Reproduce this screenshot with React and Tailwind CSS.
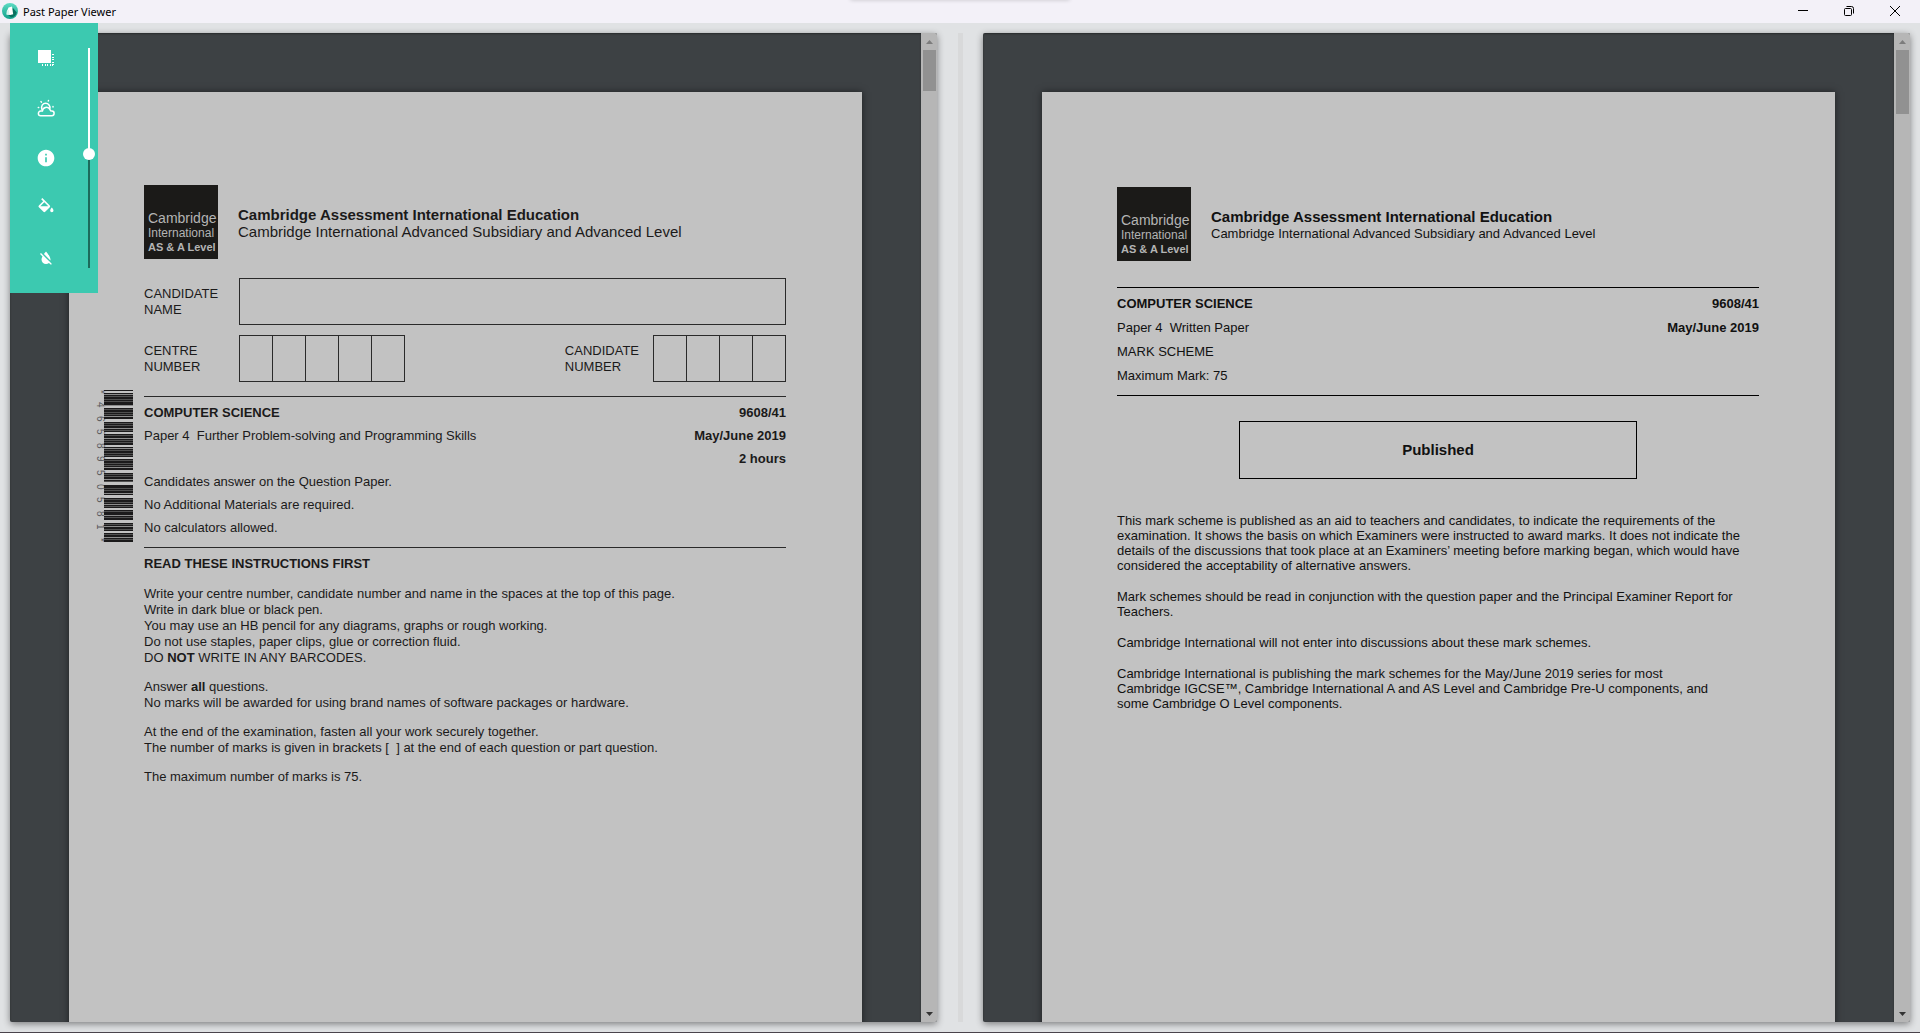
import { useState } from "react";
import { MdInfo, MdFormatColorReset } from "react-icons/md";

const BAR_GROUPS = [
  [0, 1], [3, 16], [18, 29], [32, 42], [44, 55], [57, 67], [69, 80], [83, 92], [95, 105], [108, 118], [120, 130], [133, 141], [143, 152],
];
const BAR_WIDTHS = [2, 1, 1, 2, 1, 3, 1, 2, 1, 1];

function buildBars() {
  const bars = [];
  let n = 0;
  for (const [start, end] of BAR_GROUPS) {
    let y = start;
    while (y < end) {
      const h = Math.min(BAR_WIDTHS[n % BAR_WIDTHS.length], end - y);
      bars.push({ y, h, fill: "#1b1a1b" });
      y += h;
      if (y < end) bars.push({ y, h: 1, fill: n % 4 === 1 ? "#8c8c8c" : "#505050" });
      y += 1;
      n += 1;
    }
  }
  return bars;
}

const BARS = buildBars();

function Barcode() {
  return (
    <div className="flex h-[152px] shrink-0" aria-label="Barcode">
      <div className="flex w-2 flex-col items-center justify-between text-[10px] leading-[8px] text-[#5a5a5e]">
        {"*4658950581*".split("").map((c, i) => (
          <span key={i} className="[writing-mode:vertical-rl]">{c}</span>
        ))}
      </div>
      <svg width="29" height="152" viewBox="0 0 29 152" shapeRendering="crispEdges">
        {BARS.map((b, i) => (
          <rect key={i} y={b.y} width="29" height={b.h} fill={b.fill} />
        ))}
      </svg>
    </div>
  );
}

function AppLogo() {
  return (
    <svg width="16" height="16" viewBox="0 0 16 16" aria-hidden="true">
      <defs>
        <linearGradient id="ring" x1="0" y1="0" x2="0" y2="1">
          <stop offset="0" stopColor="#5fdcc4" />
          <stop offset="1" stopColor="#0fa08a" />
        </linearGradient>
      </defs>
      <circle cx="8" cy="8" r="8" fill="url(#ring)" />
      <path d="M11 5l3.800 4.500A7 7 0 0 1 9 14.500L5 11z" fill="#08705f" />
      <path d="M6.500 4.500L10 3.500l1.200 7.700-3 .7-3.700-.5.300-3z" fill="#fff" />
      <path d="M5.200 7.500l1.600-.4.700 4.700-2.800-.4z" fill="#d4f5ee" />
    </svg>
  );
}

function LayersIcon() {
  return (
    <svg width="16" height="16" viewBox="0 0 16 16" fill="#fff" shapeRendering="crispEdges" aria-hidden="true">
      <rect width="13" height="13" />
      {[4, 7, 9, 12, 14].map((p) => (
        <rect key={"r" + p} x="14" y={p} width="2" height="1" />
      ))}
      {[4, 7, 9, 12, 14].map((p) => (
        <rect key={"b" + p} x={p} y="14" width="1" height="2" />
      ))}
    </svg>
  );
}

function WeatherIcon() {
  return (
    <svg width="18" height="18" viewBox="0 0 18 18" fill="none" stroke="#fff" strokeWidth="1.500" strokeLinecap="round" strokeLinejoin="round" aria-hidden="true">
      <path d="M3.700 16.700h11a2.300 2.300 0 0 0 .2-4.600c-1.300 0-1.700-.8-2-1.700a4 4 0 0 0-7.500 1.700H3.700a2.300 2.300 0 0 0 0 4.600z" />
      <path d="M4.900 10.200C3.800 6.500 6 4.300 8.600 4.300c2.900 0 4.900 2.600 4.200 5.200" />
      <path d="M4 2.600l.4.600M11.500 1.500l-.2.500M1.300 8.600h.4M16 7.600v.5" />
    </svg>
  );
}

function FillIcon() {
  return (
    <svg width="20" height="20" viewBox="0 0 24 24" fill="#fff" aria-hidden="true">
      <path d="M16.560 8.940L7.620 0 6.210 1.410l2.380 2.380-5.150 5.150a1.490 1.490 0 0 0 0 2.120l5.500 5.500c.29.29.68.44 1.060.44s.77-.15 1.060-.44l5.500-5.500c.59-.58.59-1.530 0-2.120zM5.210 10L10 5.210 14.790 10H5.210zM19 11.500s-2 2.170-2 3.500a2 2 0 0 0 4 0c0-1.330-2-3.500-2-3.500z" />
    </svg>
  );
}

function TitleBar() {
  return (
    <header className="relative flex h-[23px] shrink-0 items-center overflow-hidden bg-[#f3f1f8] pb-px pl-0.5">
      <AppLogo />
      <h1 className="ml-[5px] pt-0.5 font-['Noto_Sans','Open_Sans',sans-serif] text-[11px] text-black">Past Paper Viewer</h1>
      <div className="absolute -top-1 left-1/2 h-1 w-[220px] -translate-x-1/2 rounded shadow-[0_0_4px_rgba(0,0,0,0.2)]" />
      <div className="ml-auto flex h-full pr-0.5 text-black">
        <button aria-label="Minimise" className="flex w-[46px] items-center justify-center">
          <svg width="10" height="10" viewBox="0 0 10 10"><path d="M0 4.500h10" stroke="currentColor" /></svg>
        </button>
        <button aria-label="Restore" className="flex w-[46px] items-center justify-center">
          <svg width="10" height="10" viewBox="0 0 10 10" fill="none" stroke="currentColor">
            <rect x=".5" y="2.500" width="7" height="7" rx="1" />
            <path d="M2.500.5h5a2 2 0 0 1 2 2v5" />
          </svg>
        </button>
        <button aria-label="Close" className="flex w-[46px] items-center justify-center">
          <svg width="10" height="10" viewBox="0 0 10 10"><path d="M0 0l10 10M10 0L0 10" stroke="currentColor" /></svg>
        </button>
      </div>
    </header>
  );
}

function ToolPanel() {
  const [value, setValue] = useState(48);
  const tools = [
    ["Copy", <LayersIcon key="i" />],
    ["Theme", <WeatherIcon key="i" />],
    ["Information", <MdInfo key="i" size={20} />],
    ["Fill colour", <FillIcon key="i" />],
    ["Reset colour", <MdFormatColorReset key="i" size={18} />],
  ];
  return (
    <aside className="absolute top-[23px] left-2.5 flex h-[270px] w-[88px] bg-[#3cc9b0] text-white">
      <div className="flex w-[72px] flex-col items-center gap-2.5 pt-[15px]">
        {tools.map(([label, icon]) => (
          <button key={label} aria-label={label} className="flex h-10 w-10 items-center justify-center">{icon}</button>
        ))}
      </div>
      <input
        type="range"
        aria-label="Brightness"
        value={value}
        onChange={(e) => setValue(Number(e.target.value))}
        className="mt-[25px] h-[220px] w-3.5 appearance-none bg-transparent [writing-mode:vertical-lr] [&::-webkit-slider-runnable-track]:w-0.5 [&::-webkit-slider-runnable-track]:bg-[linear-gradient(to_bottom,#ffffff_48%,#1c6b5b_48%)] [&::-webkit-slider-thumb]:-ml-[5px] [&::-webkit-slider-thumb]:h-3 [&::-webkit-slider-thumb]:w-3 [&::-webkit-slider-thumb]:appearance-none [&::-webkit-slider-thumb]:rounded-full [&::-webkit-slider-thumb]:bg-white"
      />
    </aside>
  );
}

function ScrollBar({ thumb }) {
  return (
    <div className="flex w-4 shrink-0 flex-col items-center bg-[#b6b6b6]">
      <button aria-label="Scroll up" className="flex h-[17px] w-full items-center justify-center text-[#7c7c7c]">
        <svg width="7" height="4" viewBox="0 0 7 4" fill="currentColor"><path d="M0 4l3.500-4L7 4z" /></svg>
      </button>
      <div className={"w-[13px] bg-[#919191] " + thumb} />
      <button aria-label="Scroll down" className="mt-auto flex h-[17px] w-full items-center justify-center text-[#333333]">
        <svg width="7" height="4" viewBox="0 0 7 4" fill="currentColor"><path d="M0 0h7L3.500 4z" /></svg>
      </button>
    </div>
  );
}

function Viewer({ label, thumb, children }) {
  return (
    <section aria-label={label} className="flex min-w-0 flex-1 overflow-hidden rounded-[2px] bg-[#3d4144] shadow-[0_2px_7px_rgba(0,0,0,0.45)]">
      <div className="flex min-w-0 flex-1 justify-center overflow-hidden pt-[59px] shadow-[inset_0_1px_2px_rgba(0,0,0,0.35)]">
        <article className="h-[1122px] w-full max-w-[793px] shrink-0 bg-[#c2c2c2] pr-[76px] pl-[75px] text-[13px] leading-[16px] shadow-[0_0_7px_rgba(0,0,0,0.5)]">
          {children}
        </article>
      </div>
      <ScrollBar thumb={thumb} />
    </section>
  );
}

function CambridgeLogo() {
  return (
    <div className="flex h-[74px] w-[74px] shrink-0 flex-col justify-end bg-[#1b1a18] pb-1 pl-1 whitespace-nowrap text-[#b4b4b4]">
      <span className="text-[14px] leading-[16px]">Cambridge</span>
      <span className="text-[12px] leading-[14px]">International</span>
      <span className="text-[11px] leading-[15px] font-bold">AS &amp; A Level</span>
    </div>
  );
}

function Cells({ count }) {
  return (
    <div className="flex h-[47px] border-l border-[#2a2a2a]">
      {Array.from({ length: count }, (_, i) => (
        <div key={i} className="w-[33px] border-y border-r border-[#2a2a2a]" />
      ))}
    </div>
  );
}

function QuestionPaper() {
  return (
    <div className="pt-[93px] text-[#1b1a1a]">
      <div className="flex gap-5">
        <CambridgeLogo />
        <div className="pt-[21px] text-[15px] leading-[17px]">
          <p className="font-bold">Cambridge Assessment International Education</p>
          <p>Cambridge International Advanced Subsidiary and Advanced Level</p>
        </div>
      </div>

      <div className="mt-[19px] flex items-center">
        <p className="w-[95px] leading-[16px]">CANDIDATE<br />NAME</p>
        <div className="h-[47px] flex-1 border border-[#2a2a2a]" />
      </div>
      <div className="mt-2.5 flex items-center">
        <p className="w-[95px] leading-[16px]">CENTRE<br />NUMBER</p>
        <Cells count={5} />
        <p className="mr-3.5 ml-auto leading-[16px]">CANDIDATE<br />NUMBER</p>
        <Cells count={4} />
      </div>

      <div className="mt-2 -ml-12 flex items-start gap-[11px]">
        <Barcode />
        <div className="mt-1.5 flex-1 border-y border-[#2a2a2a] pt-1 pb-2 leading-[23px]">
          <div className="flex justify-between font-bold">
            <h2>COMPUTER SCIENCE</h2>
            <p>9608/41</p>
          </div>
          <div className="flex justify-between">
            <p>Paper 4&nbsp; Further Problem-solving and Programming Skills</p>
            <p className="font-bold">May/June 2019</p>
          </div>
          <p className="text-right font-bold">2 hours</p>
          <p>Candidates answer on the Question Paper.</p>
          <p>No Additional Materials are required.</p>
          <p>No calculators allowed.</p>
        </div>
      </div>

      <h3 className="mt-2 font-bold">READ THESE INSTRUCTIONS FIRST</h3>
      <div className="mt-3.5 flex flex-col gap-[13px]">
        <p>
          Write your centre number, candidate number and name in the spaces at the top of this page.<br />
          Write in dark blue or black pen.<br />
          You may use an HB pencil for any diagrams, graphs or rough working.<br />
          Do not use staples, paper clips, glue or correction fluid.<br />
          DO <b>NOT</b> WRITE IN ANY BARCODES.
        </p>
        <p>
          Answer <b>all</b> questions.<br />
          No marks will be awarded for using brand names of software packages or hardware.
        </p>
        <p>
          At the end of the examination, fasten all your work securely together.<br />
          The number of marks is given in brackets [&nbsp; ] at the end of each question or part question.
        </p>
        <p>The maximum number of marks is 75.</p>
      </div>
    </div>
  );
}

function MarkScheme() {
  return (
    <div className="pt-[95px] text-[#111111]">
      <div className="flex gap-5">
        <CambridgeLogo />
        <div className="pt-[21px] leading-[17px]">
          <p className="text-[15px] font-bold">Cambridge Assessment International Education</p>
          <p>Cambridge International Advanced Subsidiary and Advanced Level</p>
        </div>
      </div>

      <div className="mt-[26px] flex justify-between border-y border-black pt-1 pb-[7px]">
        <div className="flex flex-col leading-[24px]">
          <h2 className="font-bold">COMPUTER SCIENCE</h2>
          <p>Paper 4&nbsp; Written Paper</p>
          <p>MARK SCHEME</p>
          <p>Maximum Mark: 75</p>
        </div>
        <div className="text-right leading-[24px] font-bold">
          <p>9608/41</p>
          <p>May/June 2019</p>
        </div>
      </div>

      <div className="mx-auto mt-[25px] flex h-[58px] max-w-[398px] items-center justify-center border border-black text-[15px] font-bold">
        Published
      </div>

      <div className="mt-[34px] flex flex-col gap-4 leading-[15px]">
        <p>
          This mark scheme is published as an aid to teachers and candidates, to indicate the requirements of the<br />
          examination. It shows the basis on which Examiners were instructed to award marks. It does not indicate the<br />
          details of the discussions that took place at an Examiners’ meeting before marking began, which would have<br />
          considered the acceptability of alternative answers.
        </p>
        <p>
          Mark schemes should be read in conjunction with the question paper and the Principal Examiner Report for<br />
          Teachers.
        </p>
        <p>Cambridge International will not enter into discussions about these mark schemes.</p>
        <p>
          Cambridge International is publishing the mark schemes for the May/June 2019 series for most<br />
          Cambridge IGCSE™, Cambridge International A and AS Level and Cambridge Pre-U components, and<br />
          some Cambridge O Level components.
        </p>
      </div>
    </div>
  );
}

export default function App() {
  return (
    <div className="relative flex h-screen flex-col overflow-hidden border-b border-[#4a434b] bg-[#e0e2e4] font-['Liberation_Sans',Arial,sans-serif]">
      <TitleBar />
      <main className="flex min-h-0 flex-1 p-2.5">
        <Viewer label="Question paper" thumb="h-[41px]">
          <QuestionPaper />
        </Viewer>
        <div className="flex w-[46px] shrink-0 justify-center">
          <div className="w-[5px] bg-[#d8d9da]" />
        </div>
        <Viewer label="Mark scheme" thumb="h-16">
          <MarkScheme />
        </Viewer>
      </main>
      <ToolPanel />
    </div>
  );
}
